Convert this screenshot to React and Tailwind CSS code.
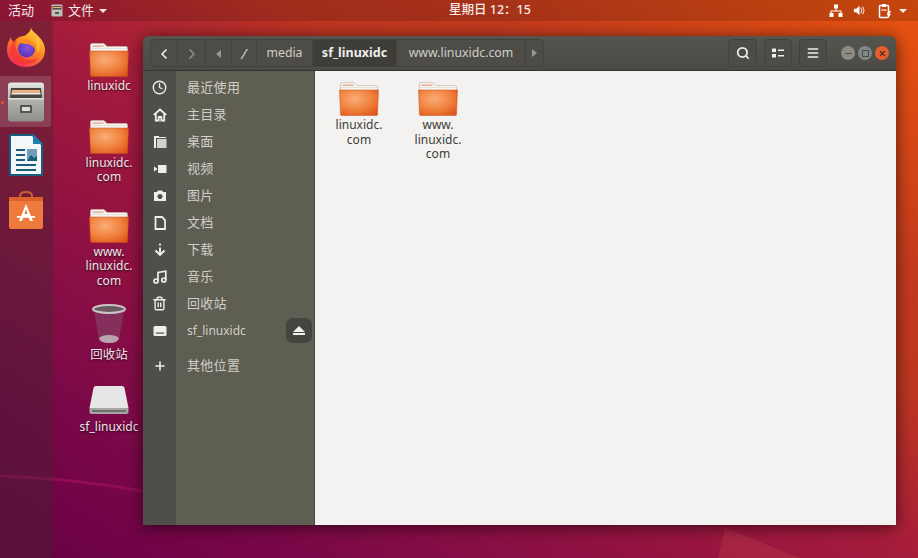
import { ChevronLeft, ChevronRight, Clock, Trash2, Plus, Search, Menu, Minus, X } from "lucide-react"

const FONT = "font-['Noto_Sans','Noto_Sans_CJK_SC',sans-serif]"

function Folder({ className }) {
  return (
    <svg viewBox="0 0 40 34" className={className}>
      <defs>
        <radialGradient id="folderBody" cx="0.4" cy="0.35" r="0.85">
          <stop offset="0" stopColor="#f9ac78" />
          <stop offset="0.5" stopColor="#f0823e" />
          <stop offset="1" stopColor="#dd4c16" />
        </radialGradient>
      </defs>
      <path d="M1.500 10V2Q1.500 0.500 3 0.500H15l3 3h19Q38.500 3.500 38.500 5V10z" fill="#f6f3ef" stroke="#c9b9ab" strokeWidth="0.700" />
      <rect x="3.500" y="2.500" width="11" height="1.300" fill="#e3a48e" />
      <rect x="2" y="5" width="36" height="1" fill="#e7e2dc" />
      <path d="M0.500 8H39.500L38.500 32.500Q38.500 33.500 37.500 33.500H2.500Q1.500 33.500 1.500 32.500z" fill="url(#folderBody)" stroke="#c9501f" strokeWidth="0.500" />
    </svg>
  )
}

function FirefoxIcon() {
  return (
    <svg viewBox="0 0 40 40" className="w-10 h-10">
      <defs>
        <linearGradient id="ffOuter" x1="0.8" y1="0" x2="0.2" y2="1">
          <stop offset="0" stopColor="#ffe04a" />
          <stop offset="0.4" stopColor="#ff9420" />
          <stop offset="1" stopColor="#f0245c" />
        </linearGradient>
        <radialGradient id="ffGlobe" cx="0.55" cy="0.4" r="0.7">
          <stop offset="0" stopColor="#8a52e0" />
          <stop offset="1" stopColor="#4f2fb0" />
        </radialGradient>
      </defs>
      <path d="M25 0c0 4 5 6 8 10 5 5 6 10 6 13 0 10-8 17-19 17S1 33 1 23C1 17 3 13 5 10c0 3 1 4 3 5 2-4 7-6 10-6 4-2 7-5 7-9z" fill="url(#ffOuter)" />
      <path d="M4 24c0-6 3-10 7-12-2 3-2 6-1 9 1 6 6 12 14 12 4 0 7-1 9-3-3 5-8 7-13 7-9 0-16-6-16-13z" fill="#f4362e" opacity="0.75" />
      <circle cx="20.500" cy="22" r="8.500" fill="url(#ffGlobe)" />
      <path d="M11 15c4-3 11-4 15 0 2 2 3 5 3 7-2-3-5-5-8-5-4 0-7-1-10-2z" fill="#ff8a1f" />
      <path d="M30 9c4 5 5 12 2 17-1-6-1-11-2-17z" fill="#ffc42e" />
    </svg>
  )
}

function FilesIcon() {
  return (
    <svg viewBox="0 0 38 40" className="w-[38px] h-10">
      <defs>
        <linearGradient id="filesBody" x1="0" y1="0" x2="0" y2="1">
          <stop offset="0" stopColor="#e8e8e5" />
          <stop offset="0.4" stopColor="#b4b4b1" />
          <stop offset="1" stopColor="#8f8f8c" />
        </linearGradient>
      </defs>
      <rect x="1" y="0.500" width="36" height="39" rx="3" fill="url(#filesBody)" />
      <path d="M4 6H34L35 16H3z" fill="#4a4541" />
      <rect x="5" y="8" width="28" height="2.500" fill="#f5b07c" />
      <rect x="4.500" y="10.500" width="29" height="2" fill="#f1ece2" />
      <rect x="1" y="16" width="36" height="1.500" fill="#dededb" />
      <rect x="13" y="23" width="12" height="8" rx="1" fill="#55554f" />
      <rect x="15" y="25" width="8" height="4" fill="#dedede" />
    </svg>
  )
}

function WriterIcon() {
  return (
    <svg viewBox="0 0 34 42" className="w-[34px] h-[42px]">
      <path d="M0 0H24L34 10V42H0z" fill="#185d7c" />
      <path d="M2 2H23L32 11V40H2z" fill="#f4f7f9" />
      <path d="M24 0L34 10H24z" fill="#1d7fb0" />
      <rect x="7" y="15" width="9" height="2" fill="#185d7c" />
      <rect x="7" y="20" width="9" height="2" fill="#185d7c" />
      <rect x="7" y="25" width="9" height="2" fill="#185d7c" />
      <rect x="7" y="30" width="20" height="2" fill="#185d7c" />
      <rect x="7" y="35" width="20" height="2" fill="#185d7c" />
      <rect x="18" y="15" width="10" height="12" fill="#6f9fb8" />
      <path d="M18 27l4-6 3 3 3-2v5z" fill="#185d7c" />
    </svg>
  )
}

function SoftwareIcon() {
  return (
    <svg viewBox="0 0 36 38" className="w-9 h-[38px]">
      <path d="M12 8V5q0-4 6-4t6 4v3" fill="none" stroke="#c9602a" strokeWidth="2" />
      <path d="M1 6H35V36Q35 38 33 38H3Q1 38 1 36z" fill="#ee7a3c" />
      <path d="M1 6H35V10H1z" fill="#d9632a" />
      <path d="M18 13l-7 17h3l1.500-4h5l1.500 4h3zm-1.500 10L18 18l1.500 5z" fill="#fff" />
      <rect x="9" y="25" width="18" height="1.800" fill="#fff" />
    </svg>
  )
}

function TrashIcon() {
  return (
    <svg viewBox="0 0 34 40" className="w-[34px] h-10">
      <path d="M2 6L7 36Q8 39 17 39T27 36L32 6z" fill="#85305c" />
      <path d="M7 34Q8 39 17 39T27 34Q24 31 17 31T7 34z" fill="#b9a4ae" />
      <ellipse cx="17" cy="5" rx="16" ry="4" fill="#6c5a63" stroke="#c8c6c6" strokeWidth="2" />
    </svg>
  )
}

function DriveIcon() {
  return (
    <svg viewBox="0 0 40 30" className="w-10 h-[30px]">
      <path d="M7 0H33Q35 0 35.500 2L39.500 22H0.500L4.500 2Q5 0 7 0z" fill="#e6e6e6" />
      <path d="M0.500 22H39.500V26Q39.500 28 37.500 28H2.500Q0.500 28 0.500 26z" fill="#a5a5a3" />
      <rect x="3" y="24" width="34" height="2" fill="#6f6f6d" />
    </svg>
  )
}

function DesktopItem({ icon, text, className = "", textClass = "text-[12px]" }) {
  return (
    <div className={`flex flex-col items-center w-[70px] ml-[23px] ${className}`}>
      {icon}
      <div className={`mt-[2px] text-center leading-[14.500px] text-white/90 [text-shadow:0_1px_2px_rgba(0,0,0,0.7)] whitespace-pre ${textClass}`}>
        {text}
      </div>
    </div>
  )
}

function NavButton({ children, className = "" }) {
  return (
    <div className={`flex items-center justify-center h-full pt-[1px] border-r border-[#42413c] ${className}`}>
      {children}
    </div>
  )
}

const HomeGlyph = () => (
  <svg viewBox="0 0 14 14" className="w-[14px] h-[14px]" fill="none" stroke="#eeeeec" strokeWidth="1.800">
    <path d="M0.800 7L7 1.500 13.200 7" />
    <path d="M2.800 6V12.500H5.700V9H8.300V12.500H11.200V6" />
  </svg>
)
const FolderGlyph = () => (
  <svg viewBox="0 0 14 14" className="w-[14px] h-[14px]" fill="#eeeeec">
    <path d="M1 1h5v1h7v1H3v10H1z" />
    <path d="M4 4h9.500v9H4z" fill="#d2d2cf" />
  </svg>
)
const VideoGlyph = () => (
  <svg viewBox="0 0 14 14" className="w-[14px] h-[14px]" fill="#eeeeec">
    <path d="M1 4.500l3 2v1l-3 2z" />
    <rect x="5" y="3" width="8.500" height="8" />
  </svg>
)
const CameraGlyph = () => (
  <svg viewBox="0 0 14 14" className="w-[14px] h-[14px]">
    <path d="M1 3h3l1-1.500h4L10 3h3v9H1z" fill="#eeeeec" />
    <circle cx="7" cy="7.500" r="2.500" fill="#4f4e48" />
  </svg>
)
const DocGlyph = () => (
  <svg viewBox="0 0 14 14" className="w-[14px] h-[14px]">
    <path d="M2.500 1H9l3 3v9H2.500z" fill="none" stroke="#eeeeec" strokeWidth="1.800" />
  </svg>
)
const DownGlyph = () => (
  <svg viewBox="0 0 14 14" className="w-[14px] h-[14px]" fill="none" stroke="#eeeeec" strokeWidth="1.900">
    <path d="M7 0.500v2M7 4.500v7" />
    <path d="M2.500 7.500L7 12l4.500-4.500" />
  </svg>
)
const MusicGlyph = () => (
  <svg viewBox="0 0 14 14" className="w-[14px] h-[14px]" fill="none" stroke="#eeeeec" strokeWidth="1.700">
    <circle cx="3" cy="11" r="2" />
    <circle cx="10.800" cy="10" r="2" />
    <path d="M5 11V2.500L12.800 1.200V10" />
  </svg>
)
const DiskGlyph = () => (
  <svg viewBox="0 0 14 14" className="w-[14px] h-[14px]">
    <rect x="0.500" y="2" width="13" height="10" rx="1.500" fill="#eeeeec" />
    <rect x="3" y="8.500" width="8" height="1.200" fill="#4f4e48" />
  </svg>
)

const iconProps = { size: 15, strokeWidth: 2.2, color: "#eeeeec" }

const places = [
  { icon: <Clock {...iconProps} />, label: "最近使用" },
  { icon: <HomeGlyph />, label: "主目录" },
  { icon: <FolderGlyph />, label: "桌面" },
  { icon: <VideoGlyph />, label: "视频" },
  { icon: <CameraGlyph />, label: "图片" },
  { icon: <DocGlyph />, label: "文档" },
  { icon: <DownGlyph />, label: "下载" },
  { icon: <MusicGlyph />, label: "音乐" },
  { icon: <Trash2 {...iconProps} />, label: "回收站" },
]

function SideRow({ icon, label, className = "", textClass = "text-[13px] tracking-[0.3px]", children }) {
  return (
    <div className={`flex items-center h-[27px] ${className}`}>
      <div className="w-[33px] flex justify-center">{icon}</div>
      <div className={`ml-[11px] text-[#d0cfc7] ${textClass}`}>{label}</div>
      {children}
    </div>
  )
}

function FileItem({ text }) {
  return (
    <div className="flex flex-col items-center w-[64px]">
      <Folder className="w-10 h-[34px]" />
      <div className="mt-[2px] text-center text-[12px] leading-[14.500px] text-[#3d3c38] whitespace-pre">{text}</div>
    </div>
  )
}

export default function App() {
  return (
    <div className={`relative w-[918px] h-[558px] overflow-hidden flex flex-col bg-[linear-gradient(32deg,#680045_0%,#7a0848_17%,#a51b3c_50%,#bd3620_65%,#c23a1e_75%,#e9540f_100%)] ${FONT}`}>
      {/* Trazos del fondo */}
      <svg viewBox="0 0 918 558" className="absolute inset-0 w-[918px] h-[558px]">
        <path d="M0 476Q70 478 143 491" fill="none" stroke="#a3125f" strokeWidth="3" opacity="0.6" />
        <path d="M725 528L800 558H718z" fill="#c0404a" opacity="0.35" />
      </svg>

      {/* Barra superior */}
      <div className="relative h-[21px] shrink-0 flex items-center bg-black/15 text-[13px] text-white/90">
        <div className="ml-[8px] w-[43px]">活动</div>
        <svg viewBox="0 0 12 13" className="w-[12px] h-[13px]">
          <rect x="0.500" y="0.500" width="11" height="12" rx="1" fill="#bdbdb9" />
          <rect x="1.500" y="2" width="9" height="3.500" fill="#5a4a3f" />
          <rect x="2" y="3" width="8" height="1" fill="#f5b07c" />
          <rect x="4" y="8" width="4" height="2" fill="#55554f" />
        </svg>
        <div className="ml-[5px]">文件</div>
        <div className="ml-[5px] border-x-[4px] border-x-transparent border-t-[4px] border-t-white/90" />
        <div className="ml-[342px] text-[12.500px] font-medium whitespace-nowrap">星期日 12：15</div>
        <svg viewBox="0 0 14 14" className="ml-auto w-[14px] h-[14px]" fill="#fff">
          <rect x="5" y="0.500" width="4" height="4" />
          <rect x="0.500" y="9" width="4" height="4" />
          <rect x="9.500" y="9" width="4" height="4" />
          <path d="M6.500 4.500h1V6.500H12.500V9h-1V7.500h-9V9h-1V6.500h5z" />
        </svg>
        <svg viewBox="0 0 14 14" className="ml-[10px] w-[13px] h-[13px]" fill="#fff">
          <path d="M1 5h2.500L7 2v10L3.500 9H1z" />
          <path d="M8.500 4q2 3 0 6M10.500 3q2.800 4 0 8" fill="none" stroke="#fff" strokeWidth="1" />
        </svg>
        <svg viewBox="0 0 14 16" className="ml-[12px] w-[14px] h-[16px]">
          <rect x="1.500" y="2.500" width="9" height="12" rx="1" fill="none" stroke="#fff" strokeWidth="1.500" />
          <rect x="4" y="1" width="4" height="3" fill="#fff" />
          <rect x="3.500" y="6.500" width="5" height="1.200" fill="#fff" />
          <path d="M10 8h3l-1.500 3H13l-3 4 .8-3H9z" fill="#fff" />
        </svg>
        <div className="ml-[7px] mr-[11px] border-x-[4px] border-x-transparent border-t-[4px] border-t-white/90" />
      </div>

      <div className="relative flex flex-1 min-h-0">
        {/* Dock */}
        <div className="w-[53px] shrink-0 bg-[#3a2a2a]/35 flex flex-col items-center pr-[2px] pt-[6px]">
          <FirefoxIcon />
          <div className="relative w-[51px] h-[51px] mt-[9px] bg-white/15 rounded-r-[2px] flex items-center justify-center">
            <div className="absolute left-[1px] top-[25px] w-[3px] h-[3px] rounded-full bg-[#e95420]" />
            <FilesIcon />
          </div>
          <div className="mt-[7px]"><WriterIcon /></div>
          <div className="mt-[15px]"><SoftwareIcon /></div>
        </div>

        {/* Iconos del escritorio */}
        <div className="w-[90px] shrink-0 -ml-[2px] mr-[2px] pt-[22px]">
          <DesktopItem icon={<Folder className="w-10 h-[34px]" />} text="linuxidc" />
          <DesktopItem className="mt-[26px]" icon={<Folder className="w-10 h-[34px]" />} text={"linuxidc.\ncom"} />
          <DesktopItem className="mt-[24px]" icon={<Folder className="w-10 h-[34px]" />} text={"www.\nlinuxidc.\ncom"} />
          <DesktopItem
            className="mt-[16px]"
            textClass="text-[12.500px]"
            icon={<div className="pb-[2px]"><TrashIcon /></div>}
            text="回收站"
          />
          <DesktopItem className="mt-[23px]" icon={<div className="pb-[2px]"><DriveIcon /></div>} text="sf_linuxidc" />
        </div>

        {/* Ventana de archivos */}
        <div className="w-[753px] h-[489px] mt-[15px] shrink-0 flex flex-col rounded-t-[6px] overflow-hidden shadow-[0_2px_16px_rgba(0,0,0,0.6)]">
          <div className="h-[35px] shrink-0 flex items-center bg-[linear-gradient(#55544e,#4b4a45)] border-b border-[#353430] text-[12.300px] text-[#d0cfc7]">
            <div className="ml-[7px] flex items-center h-[28px] rounded-[4px] border border-[#42413c] bg-[#4d4c47]">
              <NavButton className="w-[27px]"><ChevronLeft size={16} strokeWidth={2.6} color="#eeeeec" /></NavButton>
              <NavButton className="w-[28px]"><ChevronRight size={16} strokeWidth={2.6} color="#8f8e86" /></NavButton>
              <NavButton className="w-[26px]">
                <div className="border-y-[4px] border-y-transparent border-r-[5px] border-r-[#9a9990]" />
              </NavButton>
              <NavButton className="w-[25px] text-[15px] italic">/</NavButton>
              <NavButton className="w-[56px]">media</NavButton>
              <NavButton className="w-[84px] bg-[#3e3d38] font-bold text-[12.500px] text-[#eeeeec]">sf_linuxidc</NavButton>
              <NavButton className="w-[129px] whitespace-nowrap">www.linuxidc.com</NavButton>
              <div className="w-[17px] flex justify-center">
                <div className="border-y-[4px] border-y-transparent border-l-[5px] border-l-[#9a9990]" />
              </div>
            </div>
            <div className="ml-auto flex items-center h-[28px] gap-[7px]">
              <div className="w-[29px] h-[28px] rounded-[4px] border border-[#42413c] bg-[#4d4c47] flex items-center justify-center">
                <Search size={14} strokeWidth={3} color="#eeeeec" />
              </div>
              <div className="w-[28px] h-[28px] rounded-[4px] border border-[#42413c] bg-[#4d4c47] flex items-center justify-center">
                <svg viewBox="0 0 12 10" className="w-[12px] h-[10px]" fill="#eeeeec">
                  <rect x="0" y="0.500" width="4" height="3.500" />
                  <rect x="0" y="6" width="4" height="3.500" />
                  <rect x="6" y="1.500" width="6" height="1.500" />
                  <rect x="6" y="7" width="6" height="1.500" />
                </svg>
              </div>
              <div className="w-[28px] h-[28px] rounded-[4px] border border-[#42413c] bg-[#4d4c47] flex items-center justify-center">
                <Menu size={14} strokeWidth={2.6} color="#eeeeec" />
              </div>
            </div>
            <div className="ml-[14px] mr-[7px] flex items-center gap-[3px]">
              <div className="w-[14px] h-[14px] rounded-full bg-[#8b8a83] flex items-center justify-center">
                <Minus size={9} strokeWidth={3} color="#4a4944" />
              </div>
              <div className="w-[14px] h-[14px] rounded-full bg-[#7d8a85] flex items-center justify-center">
                <div className="w-[7px] h-[7px] border border-[#4a4944]" />
              </div>
              <div className="w-[14px] h-[14px] rounded-full bg-[#e95f2c] flex items-center justify-center">
                <X size={9} strokeWidth={3} color="#4a2a1c" />
              </div>
            </div>
          </div>

          <div className="flex flex-1 min-h-0">
            {/* Lateral */}
            <div className="w-[172px] shrink-0 pt-[3px] bg-[linear-gradient(to_right,#4f4e48_33px,#5f5e53_33px)] border-r border-[#45443f]">
              {places.map((p) => (
                <SideRow key={p.label} icon={p.icon} label={p.label} />
              ))}
              <SideRow icon={<DiskGlyph />} label="sf_linuxidc" textClass="text-[12px]" className="relative">
                <div className="absolute left-[143px] top-[1px] w-[26px] h-[25px] rounded-[7px] bg-[#45443f] flex flex-col items-center justify-center gap-[1px]">
                  <div className="border-x-[6px] border-x-transparent border-b-[6px] border-b-[#eeeeec]" />
                  <div className="w-[12px] h-[2px] bg-[#eeeeec]" />
                </div>
              </SideRow>
              <SideRow icon={<Plus size={14} strokeWidth={2.6} color="#eeeeec" />} label="其他位置" className="mt-[8px]" />
            </div>

            {/* Contenido */}
            <div className="flex-1 bg-[#f3f2f0] flex items-start gap-[15px] pl-[12px] pt-[11px]">
              <FileItem text={"linuxidc.\ncom"} />
              <FileItem text={"www.\nlinuxidc.\ncom"} />
            </div>
          </div>
        </div>
      </div>
    </div>
  )
}
